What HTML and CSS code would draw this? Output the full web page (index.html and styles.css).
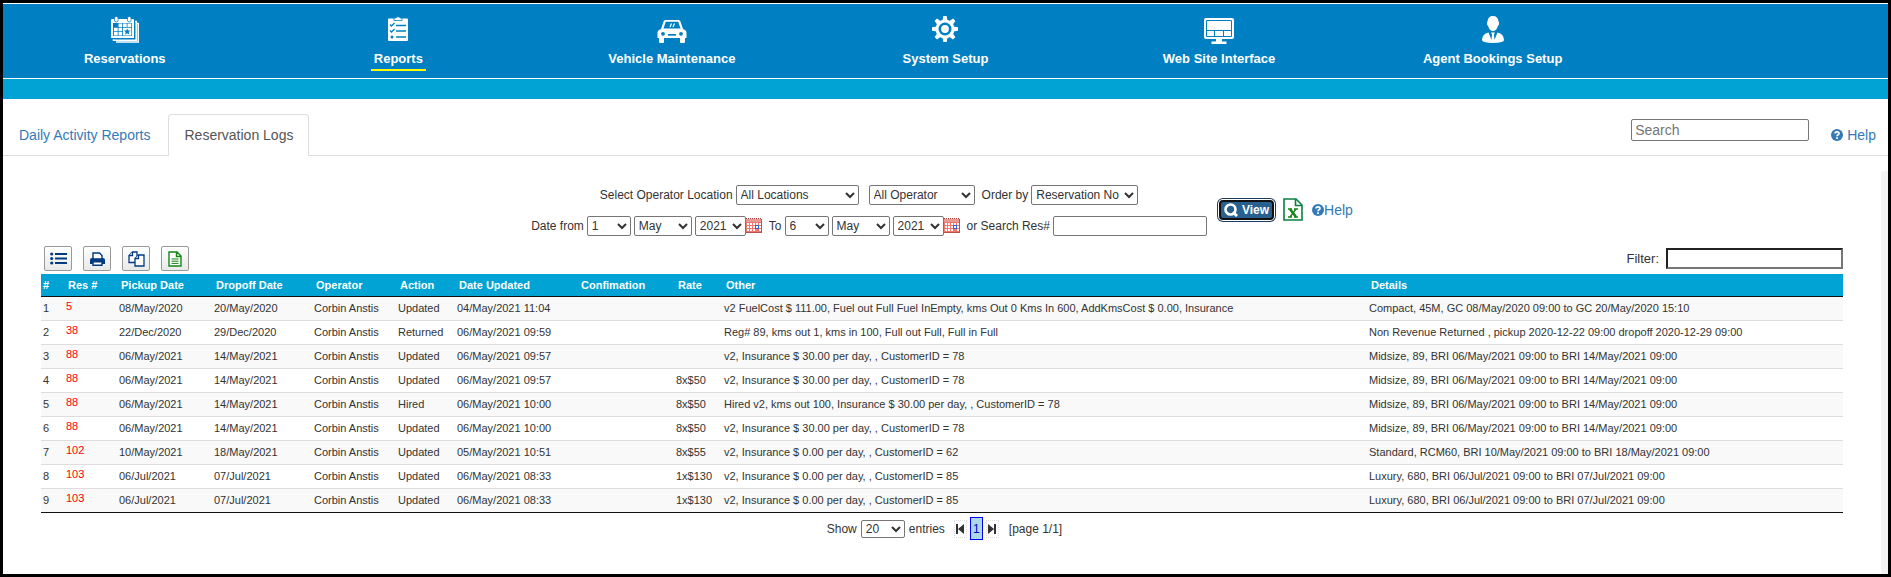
FILE: index.html
```html
<!DOCTYPE html>
<html lang="en">
<head>
  <meta charset="UTF-8" />
  <title>Reservation Logs</title>
  <link rel="stylesheet" href="styles.css">
</head>
<body>

  <!-- shared icons -->
  <svg class="sprite" aria-hidden="true">
    <symbol id="i-cal" viewBox="0 0 16 16">
      <path fill="#f0776e" d="M0 1h16v14H0z"/>
      <path fill="#e89a94" d="M0 1h16v3H0z"/>
      <path stroke="#a8403c" stroke-width="1" stroke-dasharray="1 1" d="M0 .5h16"/>
      <path fill="#fff" d="M1 5h2v2H1zM4 5h2v2H4zM7 5h2v2H7zM10 5h2v2h-2zM13 5h2v2h-2zM1 8h2v2H1zM4 8h2v2H4zM7 8h2v2H7zM13 8h2v2h-2zM1 11h2v2H1zM4 11h2v2H4zM7 11h2v2H7zM13 11h2v2h-2z"/>
      <path fill="#fff" stroke="#2a5bd0" d="M9.500 7.500h3v3h-3z"/>
      <path fill="none" stroke="#b9504a" d="M15.500 1v13.500H0"/>
    </symbol>
    <symbol id="i-help" viewBox="0 0 12 12">
      <circle cx="6" cy="6" r="6" fill="#337ab7"/>
      <path d="M4 4.600C4 2.300 8 2.300 8 4.500 8 5.900 6 5.700 6 7.300" fill="none" stroke="#fff" stroke-width="1.700"/>
      <path d="M5.100 8.200h1.800v1.700H5.100z" fill="#fff"/>
    </symbol>
  </svg>

  <nav class="main-nav">
    <a href="#">
      <svg viewBox="0 0 30 28" width="30" height="28">
        <path fill="#fff" d="M2 3h21a1 1 0 0 1 1 1v18H1V4a1 1 0 0 1 1-1z"/>
        <path fill="none" stroke="#fff" stroke-width="1.500" d="M25 5.500h1.200v18.700H3.500v-1M27 7.500h1.200v18.400H6"/>
        <path fill="#0080c2" d="M3 7h19v13H3z"/>
        <path fill="#fff" d="M8.500 7.500h3.700v3.500H8.500zM13 7.500h3.700v3.500H13zM17.500 7.500h3.800v3.500h-3.800zM3.900 11.800h3.800v3.500H3.900zM8.500 11.800h3.700v3.500H8.500zM3.900 16.100h3.800v3.300H3.900zM8.500 16.100h3.700v3.300H8.500zM13 11.800h8.300v7.600H13z"/>
        <path fill="#0080c2" d="M17.200 12.400l1 2.100h2.200l-1.600 1.600.5 2.300-2.100-1.200-2.100 1.200.5-2.300-1.600-1.600h2.200z"/>
        <path fill="#fff" stroke="#0080c2" stroke-width=".8" d="M4.500 2.200a1.800 1.800 0 0 1 3.600 0v2a1.800 1.800 0 0 1-3.600 0zM17.500 2.200a1.800 1.800 0 0 1 3.600 0v2a1.800 1.800 0 0 1-3.600 0z"/>
      </svg>
      <span>Reservations</span>
    </a>
    <a href="#" class="active">
      <svg viewBox="0 0 30 28" width="30" height="28">
        <path fill="#fff" d="M6 2.500h18a1 1 0 0 1 1 1V24a1 1 0 0 1-1 1H6a1 1 0 0 1-1-1V3.500a1 1 0 0 1 1-1z"/>
        <path fill="#fff" stroke="#0080c2" stroke-width=".8" d="M11 4.500V2h2q0-1.200 2-1.200T17 2h2v2.500z"/>
        <path fill="none" stroke="#0080c2" stroke-width="1.300" d="M7 8.500l1.500 1.500L11.500 7M7 14.500l1.500 1.500 3-3M13 9.500h10M13 15h10M13 21h10"/>
        <circle cx="9" cy="21" r="1.500" fill="#0080c2"/>
      </svg>
      <span>Reports</span>
    </a>
    <a href="#">
      <svg viewBox="0 0 30 28" width="30" height="28">
        <path fill="#fff" d="M8.500 4h13q1.500 0 2 1.500L26 13q3.500 1 3.500 4v5H28v4q0 1-1 1h-3q-1 0-1-1v-4H7v4q0 1-1 1H3q-1 0-1-1v-4H.5v-5q0-3 3.500-4l2.500-7.500Q7 4 8.500 4z"/>
        <path fill="#0080c2" d="M8.800 5.800h12.400L23.500 12.500h-17z"/>
        <path fill="#0080c2" d="M11 18h8v1.700h-8z"/>
        <circle cx="6" cy="17.800" r="1.900" fill="#0080c2"/><circle cx="24" cy="17.800" r="1.900" fill="#0080c2"/>
        <path stroke="#fff" stroke-width="1.200" d="M13 11l1.500-3.500M16 11l1.500-3.500"/>
      </svg>
      <span>Vehicle Maintenance</span>
    </a>
    <a href="#">
      <svg viewBox="0 0 30 28" width="30" height="28">
        <g fill="#fff" transform="translate(15 13)">
          <circle r="9.500"/>
          <path id="tooth" d="M-2.500-8L-1.700-13h3.400L2.500-8zM-2.500 8l.8 5h3.400l.8-5z"/>
          <use href="#tooth" transform="rotate(45)"/>
          <use href="#tooth" transform="rotate(90)"/>
          <use href="#tooth" transform="rotate(135)"/>
          <circle r="6.500" fill="#0080c2"/>
          <circle r="3.900"/>
        </g>
      </svg>
      <span>System Setup</span>
    </a>
    <a href="#">
      <svg viewBox="0 0 30 28" width="30" height="28">
        <path fill="#fff" d="M2 2h26q2 0 2 2v17q0 2-2 2H18v2.500h4.500V28h-15v-2.500H12V23H2q-2 0-2-2V4q0-2 2-2z"/>
        <path fill="none" stroke="#0080c2" d="M2.500 4.500h25v16h-25zM2.500 14.500h25M10.500 14.500v6M19.500 14.500v6"/>
      </svg>
      <span>Web Site Interface</span>
    </a>
    <a href="#">
      <svg viewBox="0 0 30 28" width="30" height="28">
        <path fill="#fff" d="M15 0q5 0 5.500 5.500 1 .5.500 2.500-.3 1.500-1 1.800Q18.500 15 15 15t-5-5.200Q9.300 9.500 9 8q-.5-2 .5-2.500Q10 0 15 0z"/>
        <path fill="#fff" d="M10.500 16.500L13.500 24 14 18.500 13 16.500h4l-1 2 .5 5.500 3-7.500Q26 18 26 24q0 1.500-2.500 2-3.500 1-8.500 1t-8.500-1Q4 25.500 4 24q0-6 6.500-7.500z"/>
      </svg>
      <span>Agent Bookings Setup</span>
    </a>
  </nav>
  <div class="sub-bar"></div>

  <div class="tabs">
    <a href="#" class="tab">Daily Activity Reports</a>
    <a href="#" class="tab active">Reservation Logs</a>
    <input type="text" class="site-search" placeholder="Search" aria-label="Search">
    <a href="#" class="tab-help"><svg width="12" height="12"><use href="#i-help"/></svg>Help</a>
  </div>

  <main class="panel">
    <form class="search-form">
      <div class="form-rows">
        <div class="form-row">
          <div class="group">
            <label for="location">Select Operator Location</label>
            <select id="location" class="w-location"><option>All Locations</option></select>
          </div>
          <select class="w-operator" aria-label="Operator"><option>All Operator</option></select>
          <div class="group">
            <label for="orderBy">Order by</label>
            <select id="orderBy" class="w-order"><option>Reservation No</option></select>
          </div>
        </div>
        <div class="form-row">
          <div class="group">
            <label for="fromDay">Date from</label>
            <select id="fromDay" class="w-day"><option>1</option></select>
            <select class="w-month" aria-label="From month"><option>May</option></select>
            <div class="year">
              <select class="w-year" aria-label="From year"><option>2021</option></select>
              <svg width="16" height="16"><use href="#i-cal"/></svg>
            </div>
          </div>
          <div class="group">
            <label for="toDay">To</label>
            <select id="toDay" class="w-day"><option>6</option></select>
            <select class="w-month" aria-label="To month"><option>May</option></select>
            <div class="year">
              <select class="w-year" aria-label="To year"><option>2021</option></select>
              <svg width="16" height="16"><use href="#i-cal"/></svg>
            </div>
          </div>
          <div class="group">
            <label for="resNo">or Search Res#</label>
            <input type="text" id="resNo" class="w-res">
          </div>
        </div>
      </div>
      <div class="form-actions">
        <button type="button" class="view-btn">
          <svg width="14" height="14" viewBox="0 0 14 14"><circle cx="6.500" cy="6.500" r="5" fill="none" stroke="#fff" stroke-width="2.600"/><path d="M9 9l4 4" stroke="#fff" stroke-width="3"/></svg>
          View
        </button>
        <svg width="20" height="23" viewBox="0 0 20 23">
          <path fill="#fff" stroke="#0b8043" stroke-width="1.600" d="M1 1h12l6 6v15H1z"/>
          <path fill="none" stroke="#0b8043" stroke-width="1.600" d="M12.500 1v6.500H19"/>
          <path fill="none" stroke="#138613" stroke-width="2.500" d="M7 11l6 8"/>
          <path fill="none" stroke="#138613" stroke-width="1.400" d="M13 11l-6 8M5 11h4M11 11h4M5 19h4M11 19h4"/>
        </svg>
        <a href="#" class="form-help"><svg width="12" height="12"><use href="#i-help"/></svg>Help</a>
      </div>
    </form>

    <div class="toolbar">
      <button type="button" aria-label="Columns">
        <svg width="17" height="13" viewBox="0 0 17 13"><g fill="#003a80"><path d="M5 1h12v2H5zM5 5.500h12v2H5zM5 10h12v2H5z"/><circle cx="1.700" cy="2" r="1.600"/><circle cx="1.700" cy="6.500" r="1.600"/><circle cx="1.700" cy="11" r="1.600"/></g></svg>
      </button>
      <button type="button" aria-label="Print">
        <svg width="15" height="14" viewBox="0 0 15 14"><path fill="#003a80" d="M2 6h11q2 0 2 2v4h-3V9.500H3V12H0V8q0-2 2-2z"/><path fill="#fff" stroke="#003a80" stroke-width="1.400" d="M3 7V1h6.500L12 3.500V7zM3 9.700h9v3.600H3z"/></svg>
      </button>
      <button type="button" aria-label="Copy">
        <svg width="17" height="16" viewBox="0 0 17 16"><g fill="#fff" stroke="#003a80" stroke-width="1.300"><path d="M4.500 1H9v10.500H1V4.500z"/><path d="M4.500 1v3.500H1"/><path d="M10.500 4H16v11H7V7.500z"/><path d="M10.500 4v3.500H7"/></g></svg>
      </button>
      <button type="button" aria-label="Export">
        <svg width="14" height="16" viewBox="0 0 14 16"><path fill="#fff" stroke="#138613" stroke-width="1.400" d="M1 1h8l4 4v10H1zM8.500 1v4.500H13"/><path stroke="#138613" d="M3.500 8h7M3.500 10.200h7M3.500 12.400h7"/></svg>
      </button>
      <label class="filter">Filter: <input type="text"></label>
    </div>

    <table class="logs">
      <colgroup>
        <col class="c-num"><col class="c-res"><col class="c-pickup"><col class="c-dropoff"><col class="c-operator">
        <col class="c-action"><col class="c-updated"><col class="c-conf"><col class="c-rate"><col class="c-other"><col>
      </colgroup>
      <thead>
        <tr><th>#</th><th>Res #</th><th>Pickup Date</th><th>Dropoff Date</th><th>Operator</th><th>Action</th><th>Date Updated</th><th>Confimation</th><th>Rate</th><th>Other</th><th>Details</th></tr>
      </thead>
      <tbody>
        <tr><td>1</td><td><a href="#">5</a></td><td>08/May/2020</td><td>20/May/2020</td><td>Corbin Anstis</td><td>Updated</td><td>04/May/2021 11:04</td><td></td><td></td><td>v2 FuelCost $ 111.00, Fuel out Full Fuel InEmpty, kms Out 0 Kms In 600, AddKmsCost $ 0.00, Insurance</td><td>Compact, 45M, GC 08/May/2020 09:00 to GC 20/May/2020 15:10</td></tr>
        <tr><td>2</td><td><a href="#">38</a></td><td>22/Dec/2020</td><td>29/Dec/2020</td><td>Corbin Anstis</td><td>Returned</td><td>06/May/2021 09:59</td><td></td><td></td><td>Reg# 89, kms out 1, kms in 100, Full out Full, Full in Full</td><td>Non Revenue Returned , pickup 2020-12-22 09:00 dropoff 2020-12-29 09:00</td></tr>
        <tr><td>3</td><td><a href="#">88</a></td><td>06/May/2021</td><td>14/May/2021</td><td>Corbin Anstis</td><td>Updated</td><td>06/May/2021 09:57</td><td></td><td></td><td>v2, Insurance $ 30.00 per day, , CustomerID = 78</td><td>Midsize, 89, BRI 06/May/2021 09:00 to BRI 14/May/2021 09:00</td></tr>
        <tr><td>4</td><td><a href="#">88</a></td><td>06/May/2021</td><td>14/May/2021</td><td>Corbin Anstis</td><td>Updated</td><td>06/May/2021 09:57</td><td></td><td>8x$50</td><td>v2, Insurance $ 30.00 per day, , CustomerID = 78</td><td>Midsize, 89, BRI 06/May/2021 09:00 to BRI 14/May/2021 09:00</td></tr>
        <tr><td>5</td><td><a href="#">88</a></td><td>06/May/2021</td><td>14/May/2021</td><td>Corbin Anstis</td><td>Hired</td><td>06/May/2021 10:00</td><td></td><td>8x$50</td><td>Hired v2, kms out 100, Insurance $ 30.00 per day, , CustomerID = 78</td><td>Midsize, 89, BRI 06/May/2021 09:00 to BRI 14/May/2021 09:00</td></tr>
        <tr><td>6</td><td><a href="#">88</a></td><td>06/May/2021</td><td>14/May/2021</td><td>Corbin Anstis</td><td>Updated</td><td>06/May/2021 10:00</td><td></td><td>8x$50</td><td>v2, Insurance $ 30.00 per day, , CustomerID = 78</td><td>Midsize, 89, BRI 06/May/2021 09:00 to BRI 14/May/2021 09:00</td></tr>
        <tr><td>7</td><td><a href="#">102</a></td><td>10/May/2021</td><td>18/May/2021</td><td>Corbin Anstis</td><td>Updated</td><td>05/May/2021 10:51</td><td></td><td>8x$55</td><td>v2, Insurance $ 0.00 per day, , CustomerID = 62</td><td>Standard, RCM60, BRI 10/May/2021 09:00 to BRI 18/May/2021 09:00</td></tr>
        <tr><td>8</td><td><a href="#">103</a></td><td>06/Jul/2021</td><td>07/Jul/2021</td><td>Corbin Anstis</td><td>Updated</td><td>06/May/2021 08:33</td><td></td><td>1x$130</td><td>v2, Insurance $ 0.00 per day, , CustomerID = 85</td><td>Luxury, 680, BRI 06/Jul/2021 09:00 to BRI 07/Jul/2021 09:00</td></tr>
        <tr><td>9</td><td><a href="#">103</a></td><td>06/Jul/2021</td><td>07/Jul/2021</td><td>Corbin Anstis</td><td>Updated</td><td>06/May/2021 08:33</td><td></td><td>1x$130</td><td>v2, Insurance $ 0.00 per day, , CustomerID = 85</td><td>Luxury, 680, BRI 06/Jul/2021 09:00 to BRI 07/Jul/2021 09:00</td></tr>
      </tbody>
    </table>

    <div class="pager">
      <label for="pageSize">Show</label>
      <select id="pageSize" class="w-day"><option>20</option></select>
      <span>entries</span>
      <div class="pages">
        <button type="button" class="step" aria-label="First page"><svg width="8" height="10" viewBox="0 0 8 10"><path fill="#333" d="M0 0h2v10H0zM8 0v10L2 5z"/></svg></button>
        <button type="button" class="current">1</button>
        <button type="button" class="step" aria-label="Last page"><svg width="8" height="10" viewBox="0 0 8 10"><path fill="#333" d="M6 0h2v10H6zM0 0v10l6-5z"/></svg></button>
      </div>
      <span>[page 1/1]</span>
    </div>
  </main>

</body>
</html>
```
FILE: styles.css
```css
* {
  box-sizing: border-box;
}

body {
  margin: 0;
  min-height: 100vh;
  display: flex;
  flex-direction: column;
  border: 3px solid #000;
  background: #fff;
  color: #333;
  font-family: "Liberation Sans", Arial, sans-serif;
  font-size: 12px;
}

a {
  color: #337ab7;
  text-decoration: none;
}

input, select, button {
  font-family: inherit;
  font-size: 12px;
  margin: 0;
}

svg {
  display: block;
  flex: none;
}

.sprite {
  position: absolute;
  width: 0;
  height: 0;
}

/* top navigation */
.main-nav {
  display: grid;
  grid-template-columns: repeat(7, 1fr);
  padding: 12px 0 7px;
  margin: 0 -15px;
  border-top: 1px solid #fff;
  border-bottom: 1px solid #fff;
  background: #0080c2;
  clip-path: inset(0 15px);
}

.main-nav a {
  display: flex;
  flex-direction: column;
  align-items: center;
  gap: 5px;
  color: #fff;
  font-size: 13px;
  font-weight: bold;
  line-height: 20px;
}

.main-nav span {
  padding: 0 3px;
  border-bottom: 2px solid transparent;
}

.main-nav .active span {
  border-bottom-color: #ff0;
}

.sub-bar {
  height: 20px;
  background: #00a3d3;
}

/* tabs */
.tabs {
  display: flex;
  align-items: flex-start;
  gap: 2px;
  margin-top: 15px;
  border-bottom: 1px solid #ddd;
  font-size: 14px;
  line-height: 20px;
}

.tab {
  padding: 10px 15px;
  margin-bottom: -1px;
  border: 1px solid transparent;
  border-radius: 4px 4px 0 0;
}

.tab.active {
  color: #555;
  background: #fff;
  border-color: #ddd #ddd #fff;
}

.site-search {
  width: 178px;
  height: 22px;
  margin: 5px 20px 0 auto;
  padding: 1px 3px;
  border: 1px solid #767676;
  border-radius: 2px;
  font-size: 14px;
}

.tab-help {
  display: flex;
  align-items: center;
  gap: 4px;
  padding: 11px 12px 0 0;
}

/* content */
.panel {
  flex: 1;
  margin-top: 15px;
  padding: 14px 38px 0;
  border-right: 7px solid #f3f3f3;
}

.search-form {
  display: flex;
  justify-content: center;
  align-items: center;
  gap: 12px;
}

.form-rows {
  display: flex;
  flex-direction: column;
  align-items: center;
  gap: 11px;
}

.form-row {
  display: flex;
  gap: 7px;
}

.group {
  display: flex;
  align-items: center;
  gap: 3px;
}

.year {
  display: flex;
  align-items: center;
}

select, .w-res {
  height: 20px;
  border: 1px solid #767676;
  border-radius: 2px;
  background: #fff;
  color: #333;
}

.w-location { width: 123px; }
.w-operator { width: 106px; margin-left: 3px; }
.w-order { width: 107px; }
.w-day { width: 44px; }
.w-month { width: 58px; }
.w-year { width: 51px; }
.w-res { width: 154px; }

.form-actions {
  display: flex;
  align-items: center;
  gap: 9px;
  margin-bottom: 2px;
}

.view-btn {
  display: flex;
  align-items: center;
  gap: 4px;
  height: 20px;
  padding: 0 3px;
  border: 2px solid #111;
  border-radius: 4px;
  background: #286090;
  box-shadow: 0 0 0 1px #fff, 0 0 0 2px #1d3a60;
  color: #fff;
  font-weight: bold;
}

.form-help {
  display: flex;
  align-items: center;
  font-size: 14px;
}

/* table tools */
.toolbar {
  display: flex;
  align-items: center;
  gap: 11px;
  margin: 10px 0 3px;
  padding-left: 3px;
}

.toolbar button {
  display: flex;
  align-items: center;
  justify-content: center;
  width: 28px;
  height: 25px;
  padding: 0;
  border: 1px solid #999;
  border-radius: 2px;
  background: linear-gradient(#fff, #e9e9e9);
}

.filter {
  display: flex;
  align-items: center;
  gap: 7px;
  margin-left: auto;
  font-size: 13px;
}

.filter input {
  width: 177px;
  height: 21px;
  border: 2px solid;
  border-color: #222 #767676 #767676 #222;
}

/* log table */
.logs {
  width: 100%;
  table-layout: fixed;
  border-collapse: separate;
  border-spacing: 0;
  border-bottom: 1px solid #111;
  font-size: 11px;
  white-space: nowrap;
}

.c-num { width: 23px; }
.c-res { width: 53px; }
.c-pickup { width: 95px; }
.c-dropoff { width: 100px; }
.c-operator { width: 84px; }
.c-action { width: 59px; }
.c-updated { width: 122px; }
.c-conf { width: 97px; }
.c-rate { width: 48px; }
.c-other { width: 645px; }

.logs th {
  height: 23px;
  padding: 0 4px;
  border-bottom: 1px solid #111;
  background: #00a3d3;
  color: #fff;
  text-align: left;
}

.logs th:first-child {
  padding: 0 2px;
}

.logs td {
  height: 24px;
  padding: 0 2px 2px;
  border-bottom: 1px solid #ddd;
}

.logs tr:last-child td {
  height: 23px;
  border-bottom: 0;
}

.logs tbody tr:nth-child(odd) {
  background: #f9f9f9;
}

.logs td a {
  display: block;
  padding-bottom: 3px;
  color: #f00;
}

/* paging */
.pager {
  display: flex;
  justify-content: center;
  align-items: center;
  gap: 4px;
  margin-top: 4px;
  padding-left: 5px;
}

.pager select {
  height: 18px;
}

.pages {
  display: flex;
  align-items: center;
  gap: 3px;
  margin: 0 6px 0 5px;
}

.pages button {
  display: flex;
  align-items: center;
  justify-content: center;
  width: 13px;
  height: 23px;
  padding: 0;
  border: 1px solid #00f;
  background: #add8e6;
  color: #00c;
}

.pages .step {
  height: 18px;
  border: 1px dotted #ddd;
  background: #fff;
}
```
